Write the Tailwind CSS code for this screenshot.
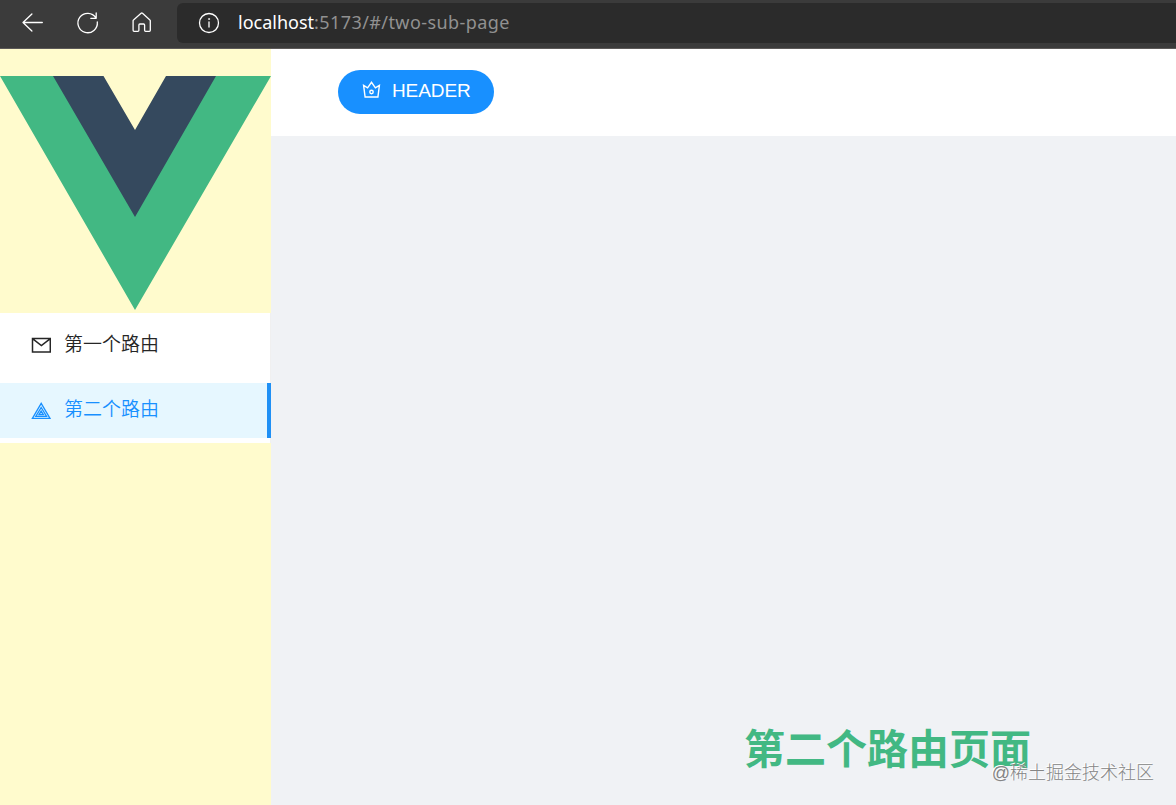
<!doctype html>
<html lang="zh-CN">

<head>
    <meta charset="UTF-8" />
    <meta name="viewport" content="width=device-width, initial-scale=1.0" />
    <title>two-sub-page</title>
    <script src="https://cdn.jsdelivr.net/npm/@tailwindcss/browser@4"></script>
</head>

<body>
    <div class="relative flex h-screen flex-col overflow-hidden bg-[#f0f2f5] font-['Liberation_Sans','Noto_Sans_CJK_SC',sans-serif]">
        <!-- Browser toolbar -->
        <div class="flex h-[49px] shrink-0 items-start border-b border-[#5c5958] bg-[#3b3b3b] text-white">
            <div class="flex h-[46px] w-[177px] shrink-0 items-center gap-[31px] pl-[21px]">
                <svg class="size-6 shrink-0" viewBox="0 0 24 24" fill="none" stroke="currentColor" stroke-width="1.3" stroke-linecap="round" stroke-linejoin="round">
                    <path d="M21.3 11.5H2M10.9 3 2 11.5l8.9 8.5" />
                </svg>
                <svg class="size-6 shrink-0" viewBox="0 0 24 24" fill="none" stroke="currentColor" stroke-width="1.3" stroke-linecap="round" stroke-linejoin="round">
                    <path d="M19.9 6.9A9.7 9.7 0 1 0 21.3 11M20.2 2v5.3h-5.4" />
                </svg>
                <svg class="size-6 shrink-0" viewBox="0 0 24 24" fill="none" stroke="currentColor" stroke-width="1.3" stroke-linecap="round" stroke-linejoin="round">
                    <path d="M2.1 9.7a1 1 0 0 1 .4-.8L10.1 2.3a1.1 1.1 0 0 1 1.4 0L18.9 8.9a1 1 0 0 1 .4.8V19.3a1 1 0 0 1-1 1h-3.700a1 1 0 0 1-1-1V14a1 1 0 0 0-1-1H8.9a1 1 0 0 0-1 1v5.3a1 1 0 0 1-1 1H3.100a1 1 0 0 1-1-1Z" />
                </svg>
            </div>
            <div class="mt-[3px] flex h-10 grow items-center rounded-l-md bg-[#2b2b2b] pl-5">
                <svg class="size-6 shrink-0" viewBox="0 0 24 24" fill="none" stroke="currentColor" stroke-width="1.3" stroke-linecap="round">
                    <circle cx="12" cy="12" r="9.5" />
                    <path d="M12 11v5" />
                    <circle cx="12" cy="8" r=".6" fill="currentColor" stroke-width=".6" />
                </svg>
                <p class="-mt-[2px] ml-[17px] whitespace-nowrap font-['Noto_Sans',sans-serif] text-[18px] leading-10 tracking-[0.42px] text-[#919191]"><span class="tracking-normal text-white">localhost</span>:5173/#/two-sub-page</p>
            </div>
        </div>

        <div class="flex min-h-0 grow">
            <!-- Sidebar -->
            <aside class="w-[271px] shrink-0 bg-[#fffbcd] pt-[27px]">
                <svg class="block h-[234px] w-[271px]" viewBox="0 0 271 234">
                    <path d="M0 0H80L135 95 190 0H271L135 234Z" fill="#42b883" />
                    <path d="M53 0H103.5L135 54 166 0H216L135 141Z" fill="#35495e" />
                </svg>
                <ul class="mt-[3px] h-[130px] border-r border-[#f0f0f0] bg-white text-[19px] text-[#262626]">
                    <li class="flex h-[62px] items-center pl-[31px]">
                        <svg class="mt-[2px] h-4 w-5 shrink-0" viewBox="0 0 20 16" fill="none" stroke="currentColor" stroke-width="1.5">
                            <path d="M1.5 1.5h17.8v13.6H1.5ZM1.8 1.9l8.6 6.6 8.6-6.6" />
                        </svg>
                        <span class="ml-[13px] mt-[2px] font-[350]">第一个路由</span>
                    </li>
                    <li class="-mr-px mt-2 flex h-[55px] items-center border-r-4 border-[#1f90f5] bg-[#e6f7ff] pl-[31px] text-[#1890ff]">
                        <svg class="h-[18px] w-5 shrink-0" viewBox="0 0 20 18" fill="none" stroke="currentColor" stroke-width="1.3">
                            <path d="M10.2 1.4 19 16.4H1.4ZM10.2 5.5 15.6 14.4H4.8ZM10.2 9 12.4 12.5H8Z" />
                        </svg>
                        <span class="-mt-px ml-[13px] font-[350]">第二个路由</span>
                    </li>
                </ul>
            </aside>

            <div class="flex grow flex-col">
                <header class="flex h-[87px] shrink-0 items-start bg-white pl-[67px] pt-[21px]">
                    <button class="flex h-11 w-[156px] items-center rounded-full bg-[#1890ff] pl-6 text-[19px] text-white">
                        <svg class="-mt-1 h-[18px] w-[19px] shrink-0" viewBox="0 0 19 18" fill="none" stroke="currentColor" stroke-width="1.4">
                            <path d="M1.6 4.3 5.6 6.8 9.5 1.3 13.4 6.8 17.4 4.3 15.9 16H3.1Z" />
                            <circle cx="9.5" cy="11" r="1.7" />
                        </svg>
                        <span class="-mt-px ml-[11px] tracking-[-0.1px]">HEADER</span>
                    </button>
                </header>
                <main class="flex grow items-end pb-[25px] pl-[473px]">
                    <h1 class="whitespace-nowrap text-[41px] font-bold leading-[60px] text-[#42b883]">第二个路由页面</h1>
                </main>
            </div>
        </div>

        <span class="absolute bottom-[18px] right-[22px] whitespace-nowrap text-[18px] font-light leading-7 text-[#858585] [text-shadow:-1px_-1px_0_#ffffff]">@稀土掘金技术社区</span>
    </div>
</body>

</html>
